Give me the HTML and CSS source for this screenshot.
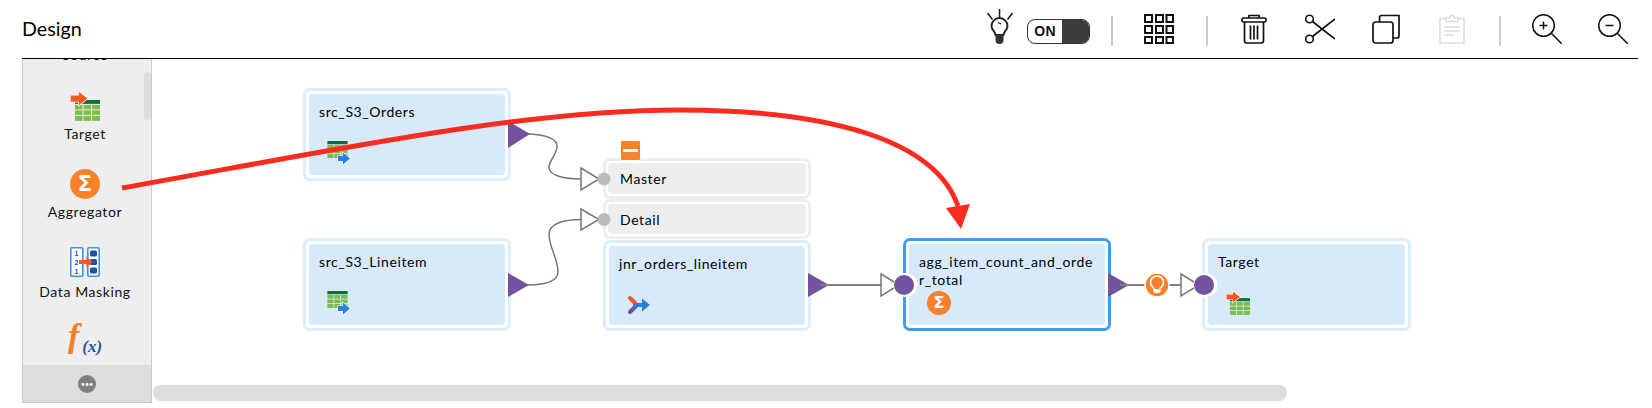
FILE: index.html
```html
<!DOCTYPE html>
<html lang="en">
<head>
    <meta charset="UTF-8">
    <meta name="viewport" content="width=device-width, initial-scale=1.0">
    <title>Design</title>
    <link rel="stylesheet" href="styles.css">
</head>
<body>
  <svg class="sprite" aria-hidden="true">
    <symbol id="ico-table" viewBox="0 0 25 21">
      <rect width="25" height="4" fill="#0f7039"/>
      <g fill="#7dbb4e">
        <rect y="5" width="7.5" height="4.5"/><rect x="8.5" y="5" width="7.5" height="4.5"/><rect x="17" y="5" width="8" height="4.5"/>
        <rect y="10.5" width="7.5" height="4.5"/><rect x="8.5" y="10.5" width="7.5" height="4.5"/><rect x="17" y="10.5" width="8" height="4.5"/>
        <rect y="16" width="7.5" height="5"/><rect x="8.5" y="16" width="7.5" height="5"/><rect x="17" y="16" width="8" height="5"/>
      </g>
    </symbol>
    <symbol id="ico-source" viewBox="0 0 24 24">
      <use href="#ico-table" width="21" height="17"/>
      <path d="M11 15H16V11.5L23 17.5 16 23.5V20H11Z" fill="#2a7de1" stroke="#fff" stroke-width="1.2" paint-order="stroke"/>
    </symbol>
    <symbol id="ico-target" viewBox="0 0 24 24">
      <use href="#ico-table" x="4" y="7" width="20" height="17"/>
      <path d="M.5 3.5H7V.5L14 6 7 11.5V8.5H.5Z" fill="#f9591f" stroke="#fff" stroke-width="1.2" paint-order="stroke"/>
    </symbol>
  </svg>

  <div class="page">
    <header class="topbar">
      <h1 class="page-title">Design</h1>
      <div class="toolbar">
        <svg class="icon-bulb" viewBox="0 0 28 35" fill="none" stroke="#222" stroke-width="1.6">
          <path d="M13.5 0V9M1.5 4 6.5 10.5M26.5 4 21.5 10.5"/>
          <path d="M9.5 26C9 22 5.5 21 5.5 17A8 8 0 0 1 21.5 17C21.5 21 18 22 17.5 26Z" stroke-width="1.9"/>
          <path d="M12 13.5 15 15" stroke-width="1.2"/>
          <path d="M9.5 26H17.5V31Q17.5 35 13.5 35T9.5 31Z" fill="#333" stroke="none"/>
        </svg>
        <div class="toggle">
          <span class="toggle-label">ON</span>
          <span class="toggle-knob"></span>
        </div>
        <span class="tool-sep tool-sep-toggle"></span>
        <div class="tool">
          <svg class="icon" viewBox="0 0 30 30" fill="none" stroke="#111" stroke-width="2">
            <path d="M1 1H8V8H1ZM12 1H19V8H12ZM22.5 1H29V8H22.5ZM1 12H8V19H1ZM12 12H19V19H12ZM22.5 12H29V19H22.5ZM1 23H8V29H1ZM12 23H19V29H12ZM22.5 23H29V29H22.5Z"/>
          </svg>
        </div>
        <span class="tool-sep"></span>
        <div class="tool">
          <svg class="icon" viewBox="0 0 30 30" fill="none" stroke="#111" stroke-width="1.7">
            <path d="M10 4V1.5H20V4"/>
            <rect x="3" y="4" width="24" height="4" rx="1.5"/>
            <path d="M5.5 8V26.5Q5.5 29 8 29H22Q24.5 29 24.5 26.5V8"/>
            <path d="M11.5 11.5V25.5M15 11.5V25.5M18.5 11.5V25.5"/>
          </svg>
        </div>
        <div class="tool">
          <svg class="icon" viewBox="0 0 30 30" fill="none" stroke="#111" stroke-width="1.6">
            <circle cx="4.5" cy="5" r="3.8"/>
            <circle cx="4.5" cy="25" r="3.8"/>
            <path d="M7.5 7.5 30 25M7.5 22.5 30 5"/>
          </svg>
        </div>
        <div class="tool">
          <svg class="icon" viewBox="0 0 30 30" fill="none" stroke="#111" stroke-width="1.7">
            <rect x="2" y="8" width="20" height="21" rx="2.5"/>
            <path d="M8.5 8V3.5Q8.5 1.5 10.5 1.5H28V22Q28 24 26 24H22"/>
          </svg>
        </div>
        <div class="tool">
          <svg class="icon" viewBox="0 0 30 30" fill="none" stroke="#dcdcdc" stroke-width="1.5">
            <path d="M9 4.5H3V29H27V4.5H21"/>
            <path d="M9 7.5V4H12.5Q13 1 15 1T17.5 4H21V7.5Z"/>
            <path d="M7.5 13H22.5M7.5 17H22.5M7.5 21H17" stroke-width="1.3"/>
          </svg>
        </div>
        <span class="tool-sep"></span>
        <div class="tool">
          <svg class="icon" viewBox="0 0 30 30" fill="none" stroke="#111" stroke-width="1.5">
            <circle cx="11.5" cy="11.5" r="10.8"/>
            <path d="M19.5 19.5 30 30M7.5 11.5H15.5M11.5 7.5V15.5"/>
          </svg>
        </div>
        <div class="tool">
          <svg class="icon" viewBox="0 0 30 30" fill="none" stroke="#111" stroke-width="1.5">
            <circle cx="11.5" cy="11.5" r="10.8"/>
            <path d="M19.5 19.5 30 30M7.5 11.5H15.5"/>
          </svg>
        </div>
      </div>
    </header>

    <div class="workspace">
      <aside class="sidebar">
        <div class="palette">
          <div class="palette-item palette-item-cut"><span class="palette-label">Source</span></div>
          <div class="palette-item">
            <svg class="palette-icon"><use href="#ico-target"/></svg>
            <span class="palette-label">Target</span>
          </div>
          <div class="palette-item">
            <span class="sigma sigma-large">Σ</span>
            <span class="palette-label">Aggregator</span>
          </div>
          <div class="palette-item">
            <svg class="palette-icon" viewBox="0 0 30 30">
              <rect x=".8" y=".8" width="12" height="28.4" rx="1" fill="#fff" stroke="#3d93e6" stroke-width="1.6"/>
              <rect x="17.8" y=".8" width="11.4" height="28.4" rx="1" fill="#fff" stroke="#3d93e6" stroke-width="1.6"/>
              <g fill="#24509f">
                <rect x="20" y="3.5" width="7" height="6" rx="1.5"/>
                <rect x="20" y="12" width="7" height="6" rx="1.5"/>
                <rect x="20" y="20.5" width="7" height="6" rx="1.5"/>
                <text class="mask-digit" x="6.5" y="9">1</text>
                <text class="mask-digit" x="6.5" y="18">2</text>
                <text class="mask-digit" x="6.5" y="27">1</text>
              </g>
              <path d="M9 13H16.5V9.5L22.5 15 16.5 20.5V17H9Z" fill="#f9591f"/>
            </svg>
            <span class="palette-label palette-label-low">Data Masking</span>
          </div>
          <div class="palette-item">
            <div class="fx-icon"><span class="fx-f">f</span><span class="fx-x">(x)</span></div>
          </div>
        </div>
        <div class="palette-scroll"></div>
        <div class="sidebar-foot"><span class="more-btn">•••</span></div>
      </aside>

      <main class="canvas">
        <div class="node node-orders">
          <div class="node-body">
            <div class="node-title">src_S3_Orders</div>
            <svg class="node-icon"><use href="#ico-source"/></svg>
          </div>
        </div>

        <div class="node node-lineitem">
          <div class="node-body">
            <div class="node-title">src_S3_Lineitem</div>
            <svg class="node-icon"><use href="#ico-source"/></svg>
          </div>
        </div>

        <div class="joiner">
          <span class="joiner-badge"></span>
          <div class="joiner-group joiner-master"><div class="joiner-row">Master</div></div>
          <div class="joiner-group"><div class="joiner-row">Detail</div></div>
          <div class="node joiner-node">
            <div class="node-body">
              <div class="node-title">jnr_orders_lineitem</div>
              <svg class="node-icon" viewBox="0 0 24 24">
                <path d="M3 5 10 12" stroke="#f15a24" stroke-width="4" stroke-linecap="round"/>
                <path d="M3 19 10 12" stroke="#71519c" stroke-width="4" stroke-linecap="round"/>
                <path d="M6 10H15V5.5L23 12 15 18.5V14H6Z" fill="#2a7de1"/>
              </svg>
            </div>
          </div>
        </div>

        <div class="node node-agg">
          <div class="node-body">
            <div class="node-title">agg_item_count_and_order_total</div>
            <span class="sigma sigma-small">Σ</span>
          </div>
        </div>

        <div class="node node-target">
          <div class="node-body">
            <div class="node-title">Target</div>
            <svg class="node-icon"><use href="#ico-target"/></svg>
          </div>
        </div>

        <div class="hscroll"></div>
      </main>

      <!-- wires, ports and the red arrow, in page coordinates -->
      <svg class="overlay" viewBox="22 59 1630 349">
        <g fill="none" stroke="#777" stroke-width="1.5">
          <path d="M526 134C548 134 558 140 557 147 556 156 548 162 549 168 550 176 565 179 581 179"/>
          <path d="M526 285C548 285 558 281 558 272 558 258 549 248 549 234 549 224 563 219.5 581 219.5"/>
        </g>
        <path d="M820 285H881M1120 285H1181" stroke="#808080" stroke-width="2"/>

        <g fill="#7253a0">
          <path d="M508 121 530 134 508 148Z"/>
          <path d="M508 273 529 285 508 297Z"/>
          <path d="M808 273 829 285 808 297Z"/>
          <path d="M1108 273 1129 285 1108 297Z"/>
        </g>
        <path d="M820 285H829M1120 285H1129" stroke="#808080" stroke-width="2"/>

        <g fill="#fff" stroke="#777" stroke-width="1.5">
          <path d="M581 168 599 179 581 190Z"/>
          <path d="M581 209 599 219.5 581 230Z"/>
          <path d="M881 274 899 285 881 296Z"/>
          <path d="M1181 274 1199 285 1181 296Z"/>
        </g>
        <circle cx="604" cy="179" r="6.5" fill="#bbb"/>
        <circle cx="604" cy="219.5" r="6.5" fill="#bbb"/>
        <circle cx="905.5" cy="285" r="12" fill="#fff"/>
        <circle cx="904" cy="285" r="10" fill="#7253a0"/>
        <circle cx="1205.5" cy="285" r="12" fill="#fff"/>
        <circle cx="1204" cy="285" r="10" fill="#7253a0"/>

        <circle cx="1157" cy="285" r="12" fill="#f8812a" stroke="#fff" stroke-width="1.5"/>
        <path d="M1154 291V288.5C1152 287 1150.5 285 1150.5 282.5A6.5 6.5 0 0 1 1163.5 282.5C1163.5 285 1162 287 1160 288.5V291Z" fill="none" stroke="#fff" stroke-width="1.5"/>
        <rect x="1154" y="289" width="6" height="4" rx="1" fill="#fff"/>

        <path d="M122 188C330 151 520 110 680 110 830 110 935 140 958 206" fill="none" stroke="#fb2c1f" stroke-width="5"/>
        <path d="M946 208 970 204 961 229Z" fill="#fb2c1f"/>
      </svg>
    </div>
  </div>
</body>
</html>
```

FILE: styles.css
```css
* {
    box-sizing: border-box;
}
html, body {
    margin: 0;
    padding: 0;
    height: 100%;
    overflow: hidden;
    background-color: #fff;
}
body {
    font-family: Lato, "Open Sans", sans-serif;
    color: #111;
}
.sprite {
    position: absolute;
    width: 0;
    height: 0;
}
.page {
    margin-left: 22px;
    width: 1616px;
}

/* top bar */
.topbar {
    display: flex;
    align-items: center;
    justify-content: space-between;
    height: 59px;
    border-bottom: 1px solid #000;
}
.page-title {
    margin: 0 0 2px;
    font-size: 19.7px;
    font-weight: 400;
    color: #000;
}
.toolbar {
    display: flex;
    align-items: center;
    margin-right: -8px;
    height: 58px;
}
.icon-bulb {
    width: 28px;
    height: 35px;
    margin: 0 13px 6px 0;
}
.toggle {
    display: flex;
    width: 63px;
    height: 25px;
    margin-top: 4px;
    border: 1px solid #333;
    border-radius: 8px;
    overflow: hidden;
}
.toggle-label {
    flex: 1;
    text-align: center;
    font-family: "Liberation Sans", sans-serif;
    font-weight: 700;
    font-size: 14px;
    line-height: 23px;
    letter-spacing: .3px;
}
.toggle-knob {
    width: 27px;
    background-color: #3c3c3c;
}
.tool-sep {
    width: 2px;
    height: 30px;
    margin: 4px 13px 0 14px;
    background-color: #ccc;
}
.tool-sep-toggle {
    margin-left: 21px;
}
.tool {
    display: flex;
    justify-content: center;
    width: 66px;
}
.icon {
    width: 30px;
    height: 30px;
}

/* left palette */
.workspace {
    position: relative;
    display: flex;
    height: 349px;
}
.sidebar {
    position: relative;
    width: 130px;
    height: 344px;
    margin-right: 1px;
    background-color: #eee;
    border: 1px solid #ccc;
    border-top: none;
    flex-shrink: 0;
}
.palette {
    height: 306px;
    padding-right: 4px;
    overflow: hidden;
}
.palette-item {
    display: flex;
    flex-direction: column;
    align-items: center;
    margin-bottom: 27px;
}
.palette-item-cut {
    margin-top: -17px;
    margin-bottom: 28px;
}
.palette-icon {
    width: 30px;
    height: 30px;
}
.palette-label {
    margin-top: 4px;
    font-size: 14px;
    line-height: 17px;
    letter-spacing: .6px;
    color: #111;
}
.palette-label-low {
    margin-top: 6px;
}
.mask-digit {
    font-family: "Liberation Sans", sans-serif;
    font-size: 7px;
    font-weight: 700;
    text-anchor: middle;
}
.fx-icon {
    display: flex;
    align-items: flex-end;
    justify-content: center;
    height: 30px;
    font-family: "Liberation Serif", serif;
    font-style: italic;
    font-weight: 700;
}
.fx-f {
    margin-bottom: 6px;
    font-size: 34px;
    line-height: 30px;
    color: #f58025;
}
.fx-x {
    font-size: 17px;
    line-height: 20px;
    color: #2b55a0;
    margin-left: 3px;
}
.palette-scroll {
    position: absolute;
    top: 13px;
    right: 0;
    width: 7px;
    height: 48px;
    border-radius: 4px;
    background-color: #ddd;
}
.sidebar-foot {
    display: flex;
    align-items: center;
    justify-content: center;
    height: 37px;
    background-color: #ddd;
}
.more-btn {
    width: 18px;
    height: 18px;
    border-radius: 50%;
    background-color: #808080;
    color: #fff;
    font-size: 7px;
    line-height: 18px;
    text-align: center;
}
.sigma {
    display: block;
    border-radius: 50%;
    background-color: #f8812a;
    color: #fff;
    font-family: "DejaVu Sans", sans-serif;
    font-weight: 700;
    text-align: center;
}
.sigma-large {
    width: 30px;
    height: 30px;
    font-size: 21px;
    line-height: 30px;
}
.sigma-small {
    width: 24px;
    height: 24px;
    margin-left: 18px;
    font-size: 16px;
    line-height: 24px;
}

/* diagram */
.canvas {
    position: relative;
    flex: 1;
}
.node {
    position: absolute;
    width: 208px;
    height: 93px;
    padding: 3px;
    background-color: #fff;
    border: 3px solid #dcedfc;
    border-radius: 7px;
}
.node-body {
    height: 100%;
    padding: 9px 0 0 0;
    background-color: #d8e9f9;
    border-radius: 4px;
}
.node-title {
    height: 38px;
    padding: 0 10px;
    font-size: 14px;
    line-height: 18px;
    letter-spacing: .6px;
    word-break: break-all;
    color: #000;
}
.node-icon {
    display: block;
    width: 24px;
    height: 24px;
    margin-left: 18px;
}
.node-orders {
    left: 150px;
    top: 29px;
}
.node-lineitem {
    left: 150px;
    top: 179px;
}
.node-agg {
    left: 750px;
    top: 179px;
    border-color: #3d9df5;
}
.node-target {
    left: 1049px;
    top: 179px;
    width: 209px;
}
.joiner {
    position: absolute;
    left: 450px;
    top: 99px;
    width: 208px;
}
.joiner-badge {
    position: absolute;
    left: 17px;
    top: -18px;
    width: 21px;
    height: 21px;
    border: 1px solid #fff;
    border-radius: 2px;
    background: linear-gradient(#fff, #fff) center / 15px 3px no-repeat #f8812a;
    z-index: 1;
}
.joiner-group {
    height: 40px;
    padding: 2px;
    background-color: #fff;
    border: 3px solid #eee;
    border-radius: 7px;
}
.joiner-master {
    height: 41px;
}
.joiner-row {
    height: 100%;
    padding-left: 12px;
    background-color: #eee;
    border-radius: 4px;
    font-size: 14px;
    line-height: 31px;
    letter-spacing: .6px;
    color: #000;
}
.joiner-node {
    position: static;
    margin-top: 1px;
    height: 91px;
}
.hscroll {
    position: absolute;
    left: 0;
    top: 326px;
    width: 1134px;
    height: 16px;
    border-radius: 8px;
    background-color: #ddd;
}
.overlay {
    position: absolute;
    left: 0;
    top: 0;
    width: 1630px;
    height: 349px;
    pointer-events: none;
}
```
